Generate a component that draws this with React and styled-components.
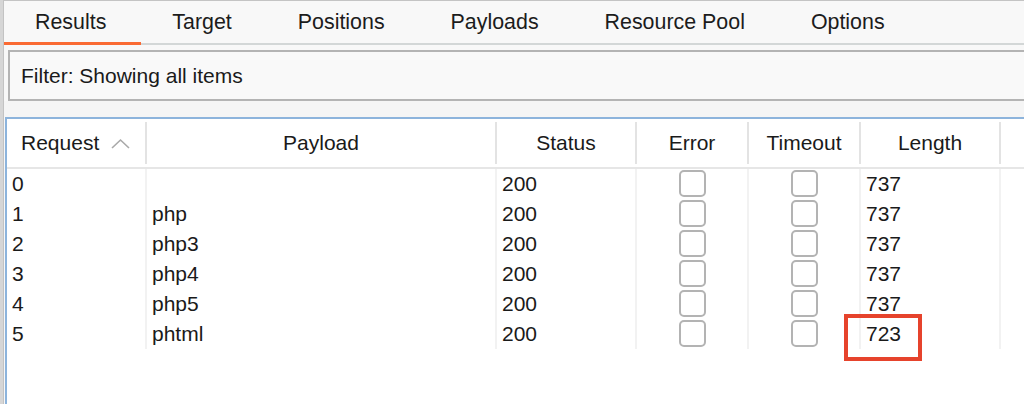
import React from 'react';
import styled, { createGlobalStyle } from 'styled-components';

const GlobalStyle = createGlobalStyle`
    html, body {
        margin: 0;
        padding: 0;
        width: 1024px;
        height: 404px;
        overflow: hidden;
        background: #f7f7f7;
    }

    body {
        font-family: "Liberation Sans", Arial, Helvetica, sans-serif;
        color: #1a1a1a;
    }
`;

const Page = styled.div`
    display: flex;
    width: 1024px;
    height: 404px;
    overflow: hidden;
`;

const SideStrip = styled.div`
    width: 3px;
    flex: none;
    background: #d6d6d6;
`;

const Main = styled.div`
    flex: 1;
    min-width: 0;
    display: flex;
    flex-direction: column;
    border-left: 1px solid #c3c3c3;
    border-top: 1px solid #c4c4c4;
    background: #f8f8f8;
    overflow: hidden;
`;

const TabBar = styled.div`
    display: flex;
    height: 44px;
    box-sizing: border-box;
    border-bottom: 2px solid #d3d7d7;
    flex: none;
`;

const Tab = styled.div`
    display: flex;
    align-items: center;
    padding: 2px 35px 0 31px;
    margin-bottom: -2px;
    font-size: 21.4px;
    color: #1c1c1c;
    white-space: nowrap;
    border-bottom: 3px solid ${p => (p.$active ? '#fa6a33' : 'transparent')};
`;

const FilterBox = styled.div`
    flex: none;
    height: 51px;
    box-sizing: border-box;
    margin: 5px -20px 0 4px;
    border: 2px solid #b4b4b4;
    background: #f9f9f9;
    display: flex;
    align-items: center;
    padding-left: 11px;
    font-size: 21px;
`;

const Spacer = styled.div`
    flex: none;
    height: 16px;
    background: #f5f5f5;
`;

const Table = styled.div`
    flex: 1;
    margin-left: 1px;
    border-left: 2px solid #8db4dc;
    border-top: 2px solid #8db4dc;
    background: #fff;
    font-size: 21px;
`;

const cols = '138px 350px 140px 112px 112px 140px 1fr';

const HeaderRow = styled.div`
    display: grid;
    grid-template-columns: ${cols};
    height: 50px;
    box-sizing: border-box;
    border-bottom: 2px solid #e6e6e6;
`;

const HeadCell = styled.div`
    display: flex;
    align-items: center;
    justify-content: ${p => (p.$left ? 'flex-start' : 'center')};
    gap: 12px;
    margin: 3px 0;
    padding-left: ${p => (p.$left ? '14px' : '0')};
    border-left: ${p => (p.$first ? 'none' : '2px solid #e3e3e3')};
`;

const Row = styled.div`
    display: grid;
    grid-template-columns: ${cols};
    height: 30px;
`;

const Cell = styled.div`
    position: relative;
    display: flex;
    align-items: center;
    justify-content: ${p => (p.$center ? 'center' : 'flex-start')};
    padding-left: ${p => (p.$center ? '0' : '5px')};
    border-left: ${p => (p.$first ? 'none' : '2px solid #f2f2f2')};
`;

const BoxCell = styled(Cell)`
    align-items: flex-start;
    padding-top: 1px;
`;

const Checkbox = styled.span`
    display: block;
    width: 27px;
    height: 27px;
    box-sizing: border-box;
    border: 2px solid #b3b3b3;
    border-radius: 5px;
    background: #fff;
`;

const Highlight = styled.span`
    position: absolute;
    left: -17px;
    top: -5px;
    width: 78px;
    height: 47px;
    box-sizing: border-box;
    border: 4px solid #e6432c;
`;

const SortArrow = () => (
    <svg width="19" height="11" viewBox="0 0 19 11">
        <polyline points="1,10 9.5,2 18,10" fill="none" stroke="#a9a9a9" strokeWidth="1.6" />
    </svg>
);

const tabs = ['Results', 'Target', 'Positions', 'Payloads', 'Resource Pool', 'Options'];

const rows = [
    { id: 0, payload: '', status: 200, length: 737 },
    { id: 1, payload: 'php', status: 200, length: 737 },
    { id: 2, payload: 'php3', status: 200, length: 737 },
    { id: 3, payload: 'php4', status: 200, length: 737 },
    { id: 4, payload: 'php5', status: 200, length: 737 },
    { id: 5, payload: 'phtml', status: 200, length: 723, marked: true }
];

const App = () => {
    return (
        <Page>
            <GlobalStyle />
            <SideStrip />
            <Main>
                <TabBar>
                    {tabs.map((t, i) => (
                        <Tab key={t} $active={i === 0}>{t}</Tab>
                    ))}
                </TabBar>
                <FilterBox>Filter: Showing all items</FilterBox>
                <Spacer />
                <Table>
                    <HeaderRow>
                        <HeadCell $first $left>Request <SortArrow /></HeadCell>
                        <HeadCell>Payload</HeadCell>
                        <HeadCell>Status</HeadCell>
                        <HeadCell>Error</HeadCell>
                        <HeadCell>Timeout</HeadCell>
                        <HeadCell>Length</HeadCell>
                        <HeadCell />
                    </HeaderRow>
                    {rows.map(r => (
                        <Row key={r.id}>
                            <Cell $first>{r.id}</Cell>
                            <Cell>{r.payload}</Cell>
                            <Cell>{r.status}</Cell>
                            <BoxCell $center><Checkbox /></BoxCell>
                            <BoxCell $center><Checkbox /></BoxCell>
                            <Cell>
                                {r.length}
                                {r.marked && <Highlight />}
                            </Cell>
                            <Cell />
                        </Row>
                    ))}
                </Table>
            </Main>
        </Page>
    );
};

export default App;
